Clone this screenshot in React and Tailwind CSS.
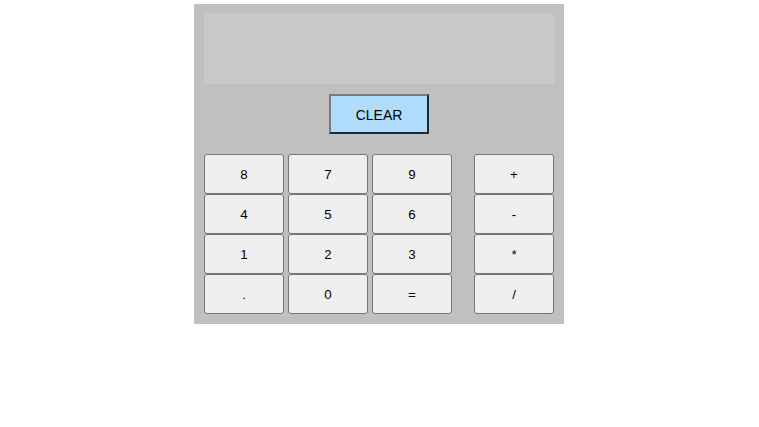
import React from "react";

const rows = [
  ["8", "7", "9", "+"],
  ["4", "5", "6", "-"],
  ["1", "2", "3", "*"],
  [".", "0", "=", "/"],
];

const Key = ({ label }) => (
  <button className="w-[80px] h-[40px] pt-[2px] bg-[#efefef] border border-[#767676] rounded-[3px] text-[13.33px] text-black">
    {label}
  </button>
);

export default function App() {
  return (
    <div className="w-[759px] h-[427px] bg-white" style={{ fontFamily: '"Liberation Sans", Arial, sans-serif' }}>
      <div className="ml-[194px] pt-[4px]">
        <div className="w-[370px] bg-[#c0c0c0] p-[10px]">
          <div className="h-[70px] bg-[#cac9c9]" />
          <div className="flex justify-center mt-[10px]">
            <button className="w-[100px] h-[40px] pt-[2px] bg-[#b0dcfc] border-2 border-t-[#7a7a7a] border-l-[#7a7a7a] border-b-[#1c2a38] border-r-[#1c2a38] text-[14px] text-black">
              CLEAR
            </button>
          </div>
          <div className="mt-[20px] flex flex-col">
            {rows.map((row, i) => (
              <div key={i} className="flex">
                <div className="flex gap-[4px]">
                  {row.slice(0, 3).map((k) => (
                    <Key key={k} label={k} />
                  ))}
                </div>
                <div className="ml-[22px]">
                  <Key label={row[3]} />
                </div>
              </div>
            ))}
          </div>
        </div>
      </div>
    </div>
  );
}
